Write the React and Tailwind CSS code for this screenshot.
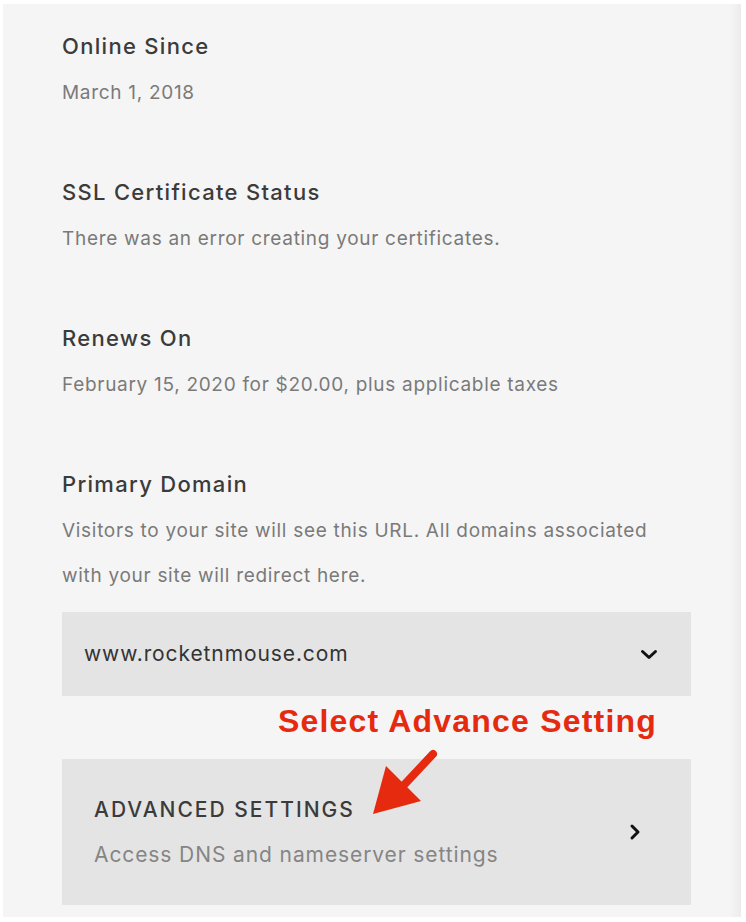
export default function App() {
  const sections = [
    { title: 'Online Since', body: 'March 1, 2018' },
    { title: 'SSL Certificate Status', body: 'There was an error creating your certificates.' },
    { title: 'Renews On', body: 'February 15, 2020 for $20.00, plus applicable taxes' },
  ]

  return (
    <div className="w-[746px] h-[922px] bg-white pt-[4px] pl-[3px] font-['Inter',sans-serif]">
      <div className="relative w-[738px] h-[913px] bg-[linear-gradient(to_right,#f5f5f5_98.5%,#ececec)] pl-[59px] pr-[50px] pt-[28px]">
        {sections.map((s, i) => (
          <div key={s.title} className={i === 0 ? '' : 'mt-[63px]'}>
            <h2 className="text-[22px] leading-[28px] font-medium tracking-[1.3px] text-[#3b3b3b]">{s.title}</h2>
            <p className="mt-[10px] text-[19px] leading-[45px] tracking-[0.7px] text-[#7a7a7a]">{s.body}</p>
          </div>
        ))}

        {/* Primary domain */}
        <div className="mt-[63px]">
          <h2 className="text-[22px] leading-[28px] font-medium tracking-[1.3px] text-[#3b3b3b]">Primary Domain</h2>
          <p className="mt-[10px] text-[19px] leading-[45px] tracking-[0.7px] text-[#7a7a7a]">
            Visitors to your site will see this URL. All domains associated
            <br />
            with your site will redirect here.
          </p>
        </div>

        <div className="mt-[14px] h-[84px] bg-[#e4e4e4] flex items-center justify-between pl-[22px] pr-[33px]">
          <span className="text-[21px] tracking-[0.9px] text-[#333]">www.rocketnmouse.com</span>
          <svg width="18" height="11" viewBox="0 0 18 11" fill="none">
            <polyline points="2.5,2.5 9,8.5 15.5,2.5" stroke="#111" strokeWidth="3" strokeLinecap="round" strokeLinejoin="round" />
          </svg>
        </div>

        {/* annotation */}
        <div className="h-[63px] flex justify-end pr-[34px] pt-[7px]">
          <span className="font-['Liberation_Sans',Arial,sans-serif] font-bold text-[32px] leading-[36px] tracking-[1.2px] text-[#e52a10]">
            Select Advance Setting
          </span>
        </div>

        <div className="h-[146px] bg-[#e4e4e4] flex items-center justify-between pl-[32px] pr-[50px]">
          <div>
            <div className="text-[21px] leading-[28px] font-medium tracking-[2px] text-[#3b3b3b]">ADVANCED SETTINGS</div>
            <div className="mt-[17px] text-[21px] leading-[28px] tracking-[0.9px] text-[#858585]">Access DNS and nameserver settings</div>
          </div>
          <svg width="12" height="18" viewBox="0 0 12 18" fill="none">
            <polyline points="3,3 9,9 3,15" stroke="#111" strokeWidth="3" strokeLinecap="round" strokeLinejoin="round" />
          </svg>
        </div>

        {/* arrow overlay */}
        <svg className="absolute left-[360px] top-[740px]" width="80" height="80" viewBox="0 0 80 80">
          <line x1="70" y1="10" x2="40" y2="42" stroke="#e52a10" strokeWidth="8" strokeLinecap="round" />
          <polygon points="10,70 23,22 58,57" fill="#e52a10" />
        </svg>
      </div>
    </div>
  )
}
